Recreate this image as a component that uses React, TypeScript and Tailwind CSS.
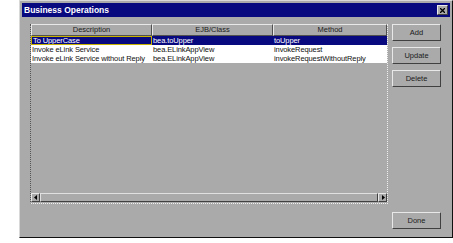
import React from 'react';

const rows = [
  { desc: 'To UpperCase', cls: 'bea.toUpper', method: 'toUpper' },
  { desc: 'Invoke eLink Service', cls: 'bea.ELinkAppView', method: 'invokeRequest' },
  { desc: 'Invoke eLink Service without Reply', cls: 'bea.ELinkAppView', method: 'invokeRequestWithoutReply' },
];

const Button: React.FC<{ label: string; className?: string }> = ({ label, className = '' }) => (
  <div
    className={`w-[49px] h-[17px] flex items-center justify-center border border-t-[#e8e8e8] border-l-[#e8e8e8] border-r-[#404040] border-b-[#404040] text-[7.5px] text-[#202020] ${className}`}
  >
    {label}
  </div>
);

const Arrow: React.FC<{ dir: 'left' | 'right' }> = ({ dir }) => (
  <div className="w-[9px] h-[9px] bg-[#aaaaaa] border border-t-[#e8e8e8] border-l-[#e8e8e8] border-r-[#404040] border-b-[#404040] flex items-center justify-center">
    <svg width="4" height="5" viewBox="0 0 4 5">
      {dir === 'left' ? <polygon points="3,0 0,2.5 3,5" fill="#000" /> : <polygon points="1,0 4,2.5 1,5" fill="#000" />}
    </svg>
  </div>
);

const cell = 'whitespace-nowrap overflow-hidden';

export default function App() {
  return (
    <div
      className="w-[453px] h-[243px] bg-white overflow-hidden"
      style={{ fontFamily: '"Liberation Sans", Arial, sans-serif' }}
    >
      <div className="ml-[19px] w-[434px] h-[238px] bg-[#aaaaaa] border border-t-[#d8d8d8] border-l-[#d8d8d8] border-r-[#101010] border-b-[#101010] flex flex-col">
        {/* title bar */}
        <div className="mx-[2px] mt-[2px] h-[14px] bg-[#08087f] flex items-center justify-between pl-[2px] pr-[2px]">
          <span className="text-white font-bold text-[8.5px] leading-none">Business Operations</span>
          <div className="w-[11px] h-[10px] bg-[#aaaaaa] border border-t-[#e8e8e8] border-l-[#e8e8e8] border-r-[#404040] border-b-[#404040] flex items-center justify-center">
            <svg width="5" height="5" viewBox="0 0 5 5">
              <path d="M0 0L5 5M5 0L0 5" stroke="#000" strokeWidth="1.3" />
            </svg>
          </div>
        </div>

        <div className="flex flex-1 pl-[10px] pt-[7px] pr-[10px] pb-[8px]">
          {/* table */}
          <div className="w-[358px] h-[180px] flex flex-col border-l border-dotted border-l-[#555555] border-r border-r-[#f0f0f0] border-b border-b-[#f0f0f0]">
            <div className="flex h-[12px] text-[7.5px] text-[#202020] leading-none">
              <div className="w-[121px] flex items-center justify-center border border-t-[#e8e8e8] border-l-[#e8e8e8] border-r-[#505050] border-b-[#505050]">Description</div>
              <div className="w-[121px] flex items-center justify-center border border-t-[#e8e8e8] border-l-[#e8e8e8] border-r-[#505050] border-b-[#505050]">EJB/Class</div>
              <div className="flex-1 flex items-center justify-center border border-t-[#e8e8e8] border-l-[#e8e8e8] border-r-[#505050] border-b-[#505050]">Method</div>
            </div>
            {rows.map((r, i) => (
              <div
                key={r.desc}
                className={`flex h-[9px] text-[7.5px] leading-none tracking-[-0.1px] ${i === 0 ? 'bg-[#08087f] text-white' : 'bg-white text-[#101010]'}`}
              >
                <div className={`w-[121px] pl-[1px] flex items-center ${cell} ${i === 0 ? 'border border-[#c8b400]' : ''}`}>{r.desc}</div>
                <div className={`w-[121px] pl-[1px] flex items-center ${cell}`}>{r.cls}</div>
                <div className={`flex-1 pl-[1px] flex items-center ${cell}`}>{r.method}</div>
              </div>
            ))}
            <div className="flex-1" />
            {/* horizontal scrollbar */}
            <div className="flex items-center h-[10px] mb-[1px] bg-[#aaaaaa]">
              <Arrow dir="left" />
              <div className="flex-1 h-[9px] border border-t-[#e0e0e0] border-l-[#e0e0e0] border-r-[#404040] border-b-[#404040] bg-[#aaaaaa]" />
              <Arrow dir="right" />
            </div>
          </div>

          {/* buttons */}
          <div className="ml-[4px] flex flex-col">
            <Button label="Add" />
            <Button label="Update" className="mt-[6px]" />
            <Button label="Delete" className="mt-[6px]" />
            <div className="flex-1" />
            <Button label="Done" />
          </div>
        </div>
      </div>
    </div>
  );
}
